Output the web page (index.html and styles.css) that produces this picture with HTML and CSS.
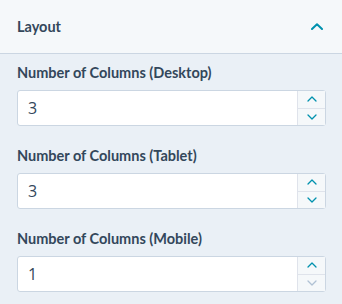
FILE: index.html
```html
<!DOCTYPE html>
<html>
<head>
<meta charset="utf-8">
<link rel="stylesheet" href="styles.css">
</head>
<body>
<div class="panel">
  <div class="header">
    <span class="title">Layout</span>
    <svg class="collapse" width="12" height="7" viewBox="0 0 12 7"><path d="M1 6 L6 1.2 L11 6" fill="none" stroke="#0091ae" stroke-width="2" stroke-linecap="round" stroke-linejoin="round"/></svg>
  </div>
  <div class="body">
    <div class="field">
      <label class="label">Number of Columns (Desktop)</label>
      <div class="input">
        <span class="value">3</span>
        <div class="stepper">
          <button class="step"><svg width="10" height="6" viewBox="0 0 10 6"><path d="M1 5 L5 1 L9 5" fill="none" stroke="#0091ae" stroke-width="1.3" stroke-linecap="round" stroke-linejoin="round"/></svg></button>
          <button class="step"><svg width="10" height="6" viewBox="0 0 10 6"><path d="M1 1 L5 5 L9 1" fill="none" stroke="#0091ae" stroke-width="1.3" stroke-linecap="round" stroke-linejoin="round"/></svg></button>
        </div>
      </div>
    </div>
    <div class="field">
      <label class="label">Number of Columns (Tablet)</label>
      <div class="input">
        <span class="value">3</span>
        <div class="stepper">
          <button class="step"><svg width="10" height="6" viewBox="0 0 10 6"><path d="M1 5 L5 1 L9 5" fill="none" stroke="#0091ae" stroke-width="1.3" stroke-linecap="round" stroke-linejoin="round"/></svg></button>
          <button class="step"><svg width="10" height="6" viewBox="0 0 10 6"><path d="M1 1 L5 5 L9 1" fill="none" stroke="#0091ae" stroke-width="1.3" stroke-linecap="round" stroke-linejoin="round"/></svg></button>
        </div>
      </div>
    </div>
    <div class="field">
      <label class="label">Number of Columns (Mobile)</label>
      <div class="input">
        <span class="value">1</span>
        <div class="stepper">
          <button class="step"><svg width="10" height="6" viewBox="0 0 10 6"><path d="M1 5 L5 1 L9 5" fill="none" stroke="#0091ae" stroke-width="1.3" stroke-linecap="round" stroke-linejoin="round"/></svg></button>
          <button class="step"><svg width="10" height="6" viewBox="0 0 10 6"><path d="M1 1 L5 5 L9 1" fill="none" stroke="#b0c1d4" stroke-width="1.3" stroke-linecap="round" stroke-linejoin="round"/></svg></button>
        </div>
      </div>
    </div>
  </div>
</div>
</body>
</html>
```
FILE: styles.css
```css
* { box-sizing: border-box; }
html, body { margin: 0; padding: 0; }
body {
  width: 342px;
  height: 304px;
  overflow: hidden;
  background: #eaf0f6;
  font-family: "Lato", "Liberation Sans", sans-serif;
  color: #33475b;
}
.header {
  height: 54px;
  background: #f5f8fa;
  border-bottom: 1px solid #cbd6e2;
  display: flex;
  align-items: center;
  justify-content: space-between;
  padding: 0 19px 0 17px;
}
.title {
  font-size: 14.5px;
  font-weight: 700;
}
.collapse { display: block; }
.body {
  padding: 10px 16px 0 17px;
  display: flex;
  flex-direction: column;
  gap: 21px;
}
.field {
  display: flex;
  flex-direction: column;
  gap: 8px;
}
.label {
  font-size: 14.5px;
  font-weight: 700;
  line-height: 18px;
  height: 18px;
}
.input {
  height: 36px;
  background: #fff;
  border: 1px solid #cbd6e2;
  border-radius: 3px;
  display: flex;
  align-items: stretch;
}
.value {
  flex: 1;
  display: flex;
  align-items: center;
  padding-left: 10px;
  font-size: 16px;
  font-weight: 400;
  font-family: "Open Sans", "Liberation Sans", sans-serif;
}
.stepper {
  width: 28px;
  display: flex;
  flex-direction: column;
  border-left: 1px solid #dfe3eb;
  background: #f5f8fa;
}
.step {
  flex: 1;
  border: 0;
  padding: 0;
  margin: 0;
  background: transparent;
  display: flex;
  align-items: center;
  justify-content: center;
}
.step + .step { border-top: 1px solid #dfe3eb; }
.step svg { display: block; }
```
